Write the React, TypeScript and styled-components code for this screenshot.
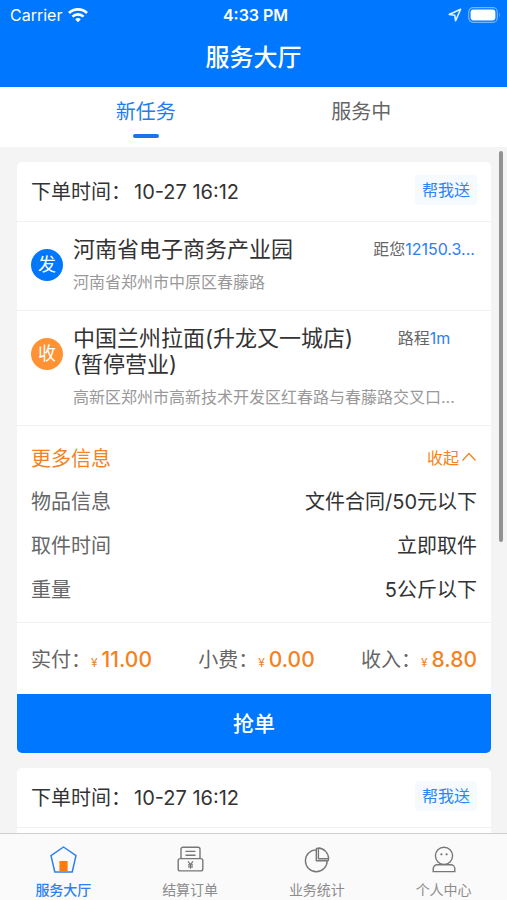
import React, { useState } from "react";
import styled, { createGlobalStyle } from "styled-components";

const BLUE = "#0077ff";
const ORANGE = "#f58220";
const LINE = "#f1f1f1";

const GlobalStyle = createGlobalStyle`
  * { box-sizing: border-box; }
  body { margin: 0; background: #f4f4f4; }
  body, button { font-family: Inter, "Noto Sans CJK SC", sans-serif; }
  button { margin: 0; padding: 0; border: 0; background: none; cursor: pointer; color: inherit; }
  h1, h2, h3, p, dl, dd, dt { margin: 0; font-weight: 400; }
`;

const Screen = styled.div`
  display: flex;
  flex-direction: column;
  height: 100vh;
  overflow: hidden;
  color: #333;
`;

const Header = styled.header`
  flex: none;
  background: ${BLUE};
  color: #fff;
`;

const StatusBar = styled.div`
  display: grid;
  grid-template-columns: 1fr auto 1fr;
  align-items: center;
  height: 30px;
  padding: 0 6px 0 10px;
  font-size: 16px;
`;

const StatusSide = styled.div<{ $end?: boolean }>`
  display: flex;
  align-items: center;
  gap: 6px;
  justify-content: ${(p) => (p.$end ? "flex-end" : "flex-start")};
`;

const Clock = styled.time`
  font-weight: 600;
`;

const PageTitle = styled.h1`
  height: 57px;
  line-height: 56px;
  font-size: 24px;
  font-weight: 500;
  text-align: center;
`;

const Tabs = styled.nav`
  flex: none;
  display: grid;
  grid-template-columns: 1fr 1fr;
  height: 60px;
  padding: 0 38px;
  background: #fff;
`;

const Tab = styled.button<{ $active: boolean }>`
  display: flex;
  flex-direction: column;
  align-items: center;
  gap: 7px;
  padding-top: 10px;
  font-size: 20px;
  line-height: 30px;
  color: ${(p) => (p.$active ? "#1f7cf0" : "#666")};

  &::after {
    content: "";
    width: 26px;
    height: 4px;
    border-radius: 2px;
    background: ${(p) => (p.$active ? "#1a73e8" : "transparent")};
  }
`;

const ListArea = styled.div`
  position: relative;
  flex: 1;
  min-height: 0;
`;

const List = styled.main`
  display: flex;
  flex-direction: column;
  gap: 15px;
  height: 100%;
  padding: 15px 16px 0 17px;
  overflow-y: auto;
  scrollbar-width: none;
`;

const ScrollThumb = styled.div`
  position: absolute;
  top: 4px;
  right: 4px;
  width: 4px;
  height: 57%;
  border-radius: 2px;
  background: #929292;
`;

const Card = styled.article`
  flex: none;
  border-radius: 5px;
  background: #fff;
  overflow: hidden;

  &:last-child {
    flex: 1 0 auto;
    border-radius: 5px 5px 0 0;
  }
`;

const CardHead = styled.div`
  display: flex;
  align-items: flex-start;
  justify-content: space-between;
  height: 60px;
  padding: 13px 14px 0;
  border-bottom: 1px solid ${LINE};
`;

const OrderTime = styled.h2`
  font-size: 20px;
  line-height: 34px;

  time {
    margin-left: 3px;
  }
`;

const Tag = styled.span`
  padding: 0 7px;
  border-radius: 3px;
  background: #f5faff;
  color: #2a85f5;
  font-size: 16px;
  line-height: 30px;
`;

const Stop = styled.section`
  display: flex;
  gap: 10px;
  padding: 14px 14px 18px;
  border-bottom: 1px solid ${LINE};
`;

const StopMark = styled.span<{ $color: string }>`
  flex: none;
  width: 32px;
  height: 32px;
  margin-top: 13px;
  border-radius: 50%;
  background: ${(p) => p.$color};
  color: #fff;
  font-size: 18px;
  line-height: 31px;
  text-align: center;
`;

const StopBody = styled.div`
  flex: 1;
  min-width: 0;
`;

const StopTop = styled.div`
  display: flex;
  justify-content: space-between;
  gap: 12px;
`;

const StopName = styled.h3`
  flex: 1;
  font-size: 22px;
  line-height: 26px;
`;

const Distance = styled.p`
  flex: none;
  width: 106px;
  overflow: hidden;
  text-overflow: ellipsis;
  white-space: nowrap;
  text-align: center;
  font-size: 16px;
  line-height: 26px;
  color: #666;
`;

const DistanceValue = styled.span`
  color: #2a80f5;
`;

const Address = styled.p`
  margin-top: 10px;
  overflow: hidden;
  text-overflow: ellipsis;
  white-space: nowrap;
  font-size: 16px;
  line-height: 20px;
  color: #999;
`;

const Info = styled.section`
  padding: 10px 14px 12px;
  border-bottom: 1px solid ${LINE};
`;

const InfoHead = styled.div`
  display: flex;
  align-items: center;
  justify-content: space-between;
  height: 42px;
  color: ${ORANGE};
`;

const InfoTitle = styled.h3`
  font-size: 20px;
`;

const Fold = styled.button`
  display: flex;
  align-items: center;
  gap: 2px;
  font-size: 16px;
`;

const InfoRow = styled.div`
  display: flex;
  align-items: center;
  justify-content: space-between;
  height: 44px;
  font-size: 20px;
`;

const InfoLabel = styled.dt`
  color: #666;
`;

const Prices = styled.dl`
  display: flex;
  align-items: center;
  justify-content: space-between;
  height: 71px;
  padding: 0 14px;
`;

const Price = styled.div`
  display: flex;
  align-items: baseline;
  font-size: 20px;
`;

const Amount = styled.dd`
  color: ${ORANGE};
  font-size: 21px;
  font-weight: 500;
`;

const Yen = styled.span`
  margin-right: 4px;
  font-size: 12px;
  font-weight: 400;
`;

const GrabButton = styled.button`
  display: block;
  width: 100%;
  height: 59px;
  padding-bottom: 3px;
  background: ${BLUE};
  color: #fff;
  font-size: 21px;
  font-weight: 500;
`;

const BottomBar = styled.nav`
  flex: none;
  display: grid;
  grid-template-columns: repeat(4, 1fr);
  height: 67px;
  border-top: 1px solid #cfcfcf;
  background: #fafafa;
`;

const BottomLink = styled.a<{ $active?: boolean }>`
  display: flex;
  flex-direction: column;
  align-items: center;
  gap: 6px;
  padding-top: 12px;
  color: ${(p) => (p.$active ? "#2a80f5" : "#8c8c8c")};
  font-size: 14px;
  line-height: 20px;
  font-weight: ${(p) => (p.$active ? 500 : 400)};
  text-decoration: none;
`;

const WifiIcon = () => (
  <svg width="20" height="16" viewBox="0 0 20 16" fill="none" stroke="#fff" strokeWidth="2.6" aria-hidden="true">
    <path d="M1 6a13 13 0 0 1 18 0" />
    <path d="M4.4 9.6a8.2 8.2 0 0 1 11.2 0" />
    <path d="M7.2 12.2a4.2 4.2 0 0 1 5.6 0L10 15.2z" fill="#fff" stroke="none" />
  </svg>
);

const LocationIcon = () => (
  <svg width="14" height="14" viewBox="0 0 14 14" fill="none" stroke="#e4f0ff" strokeWidth="1.6" strokeLinejoin="round" aria-hidden="true">
    <path d="M12.6 1.2 1.2 6.4l5.5.8.9 5.6z" />
  </svg>
);

const BatteryIcon = () => (
  <svg width="33" height="16" viewBox="0 0 33 16" aria-hidden="true">
    <rect x="0.7" y="0.7" width="28.6" height="14.6" rx="4.5" fill="none" stroke="#73b5ff" strokeWidth="1.2" />
    <rect x="2.6" y="2.6" width="24.8" height="10.8" rx="2.8" fill="#fff" />
    <path d="M31 5.4q1.8 2.6 0 5.2z" fill="#73b5ff" />
  </svg>
);

const ChevronUp = () => (
  <svg width="16" height="10" viewBox="0 0 16 10" fill="none" stroke="currentColor" strokeWidth="1.3" aria-hidden="true">
    <path d="m1.5 8.5 6.5-7 6.5 7" />
  </svg>
);

const HallIcon = () => (
  <svg width="28" height="28" viewBox="0 0 28 28" fill="none" aria-hidden="true">
    <path d="M14.5 1 27 9.6 23.2 26H5.8L2 9.6z" stroke="#2a80f5" strokeWidth="1.5" strokeLinejoin="round" />
    <path d="M10.4 15h8.2v10.5h-8.2z" fill="#ff7a10" />
  </svg>
);

const OrdersIcon = () => (
  <svg width="28" height="28" viewBox="0 0 28 28" fill="none" stroke="#777" strokeWidth="1.4" aria-hidden="true">
    <path d="M5 12.6V3.2a2 2 0 0 1 2-2h15a2 2 0 0 1 2 2v9.4" />
    <path d="M9.5 5.4h10M9.5 9.2h10" />
    <rect x="2.2" y="12.6" width="24.6" height="12.3" rx="2" />
    <path d="m12 15.4 2.5 3.2 2.5-3.2M14.5 18.6v4.2M12 18.8h5M12 20.8h5" strokeWidth="1.2" />
  </svg>
);

const StatsIcon = () => (
  <svg width="28" height="28" viewBox="0 0 28 28" fill="none" stroke="#777" strokeWidth="1.4" strokeLinejoin="round" aria-hidden="true">
    <path d="M13.3 3.9a10.9 10.9 0 1 0 10.9 10.9H13.3z" />
    <path d="M15.4 2v10.8h10.2A10.8 10.8 0 0 0 15.4 2z" />
    <path d="M13.3 3.9V2.4h2M24 14.8h1.4v-2" strokeWidth="1.1" />
  </svg>
);

const ProfileIcon = () => (
  <svg width="28" height="28" viewBox="0 0 28 28" fill="none" stroke="#777" strokeWidth="1.4" aria-hidden="true">
    <circle cx="14" cy="9.8" r="8.6" />
    <path d="M7.2 18.8h13.6a4 4 0 0 1 4 4v2.8H3.2v-2.8a4 4 0 0 1 4-4z" />
    <circle cx="11.4" cy="8.3" r="1.1" fill="#777" stroke="none" />
    <circle cx="16.6" cy="8.3" r="1.1" fill="#777" stroke="none" />
  </svg>
);

interface StopData {
  mark: string;
  color: string;
  name: string;
  address: string;
  label: string;
  distance: string;
}

interface Order {
  time: string;
  kind: string;
  stops?: StopData[];
  info?: [string, string][];
  prices?: [string, string][];
}

const orders: Order[] = [
  {
    time: "10-27 16:12",
    kind: "帮我送",
    stops: [
      { mark: "发", color: BLUE, name: "河南省电子商务产业园", address: "河南省郑州市中原区春藤路", label: "距您", distance: "12150.3..." },
      { mark: "收", color: "#ff9333", name: "中国兰州拉面(升龙又一城店)(暂停营业)", address: "高新区郑州市高新技术开发区红春路与春藤路交叉口...", label: "路程", distance: "1m" },
    ],
    info: [
      ["物品信息", "文件合同/50元以下"],
      ["取件时间", "立即取件"],
      ["重量", "5公斤以下"],
    ],
    prices: [
      ["实付：", "11.00"],
      ["小费：", "0.00"],
      ["收入：", "8.80"],
    ],
  },
  { time: "10-27 16:12", kind: "帮我送" },
];

const destinations = [
  { label: "服务大厅", Icon: HallIcon },
  { label: "结算订单", Icon: OrdersIcon },
  { label: "业务统计", Icon: StatsIcon },
  { label: "个人中心", Icon: ProfileIcon },
];

function OrderCard({ order }: { order: Order }) {
  const [open, setOpen] = useState(true);
  return (
    <Card>
      <CardHead>
        <OrderTime>
          下单时间：<time>{order.time}</time>
        </OrderTime>
        <Tag>{order.kind}</Tag>
      </CardHead>
      {order.stops?.map((s) => (
        <Stop key={s.mark}>
          <StopMark $color={s.color}>{s.mark}</StopMark>
          <StopBody>
            <StopTop>
              <StopName>{s.name}</StopName>
              <Distance>
                {s.label}
                <DistanceValue>{s.distance}</DistanceValue>
              </Distance>
            </StopTop>
            <Address>{s.address}</Address>
          </StopBody>
        </Stop>
      ))}
      {order.info && (
        <Info>
          <InfoHead>
            <InfoTitle>更多信息</InfoTitle>
            <Fold type="button" aria-expanded={open} onClick={() => setOpen(!open)}>
              收起
              <ChevronUp />
            </Fold>
          </InfoHead>
          {open && (
            <dl>
              {order.info.map(([label, value]) => (
                <InfoRow key={label}>
                  <InfoLabel>{label}</InfoLabel>
                  <dd>{value}</dd>
                </InfoRow>
              ))}
            </dl>
          )}
        </Info>
      )}
      {order.prices && (
        <>
          <Prices>
            {order.prices.map(([label, value]) => (
              <Price key={label}>
                <InfoLabel>{label}</InfoLabel>
                <Amount>
                  <Yen>¥</Yen>
                  {value}
                </Amount>
              </Price>
            ))}
          </Prices>
          <GrabButton type="button">抢单</GrabButton>
        </>
      )}
    </Card>
  );
}

export default function App() {
  const [tab, setTab] = useState(0);
  return (
    <Screen>
      <GlobalStyle />
      <Header>
        <StatusBar>
          <StatusSide>
            Carrier
            <WifiIcon />
          </StatusSide>
          <Clock>4:33 PM</Clock>
          <StatusSide $end>
            <LocationIcon />
            <BatteryIcon />
          </StatusSide>
        </StatusBar>
        <PageTitle>服务大厅</PageTitle>
      </Header>
      <Tabs>
        {["新任务", "服务中"].map((label, i) => (
          <Tab key={label} type="button" $active={tab === i} onClick={() => setTab(i)}>
            {label}
          </Tab>
        ))}
      </Tabs>
      <ListArea>
        <List>
          {orders.map((order, i) => (
            <OrderCard key={i} order={order} />
          ))}
        </List>
        <ScrollThumb />
      </ListArea>
      <BottomBar>
        {destinations.map(({ label, Icon }, i) => (
          <BottomLink key={label} href="#" $active={i === 0}>
            <Icon />
            {label}
          </BottomLink>
        ))}
      </BottomBar>
    </Screen>
  );
}
